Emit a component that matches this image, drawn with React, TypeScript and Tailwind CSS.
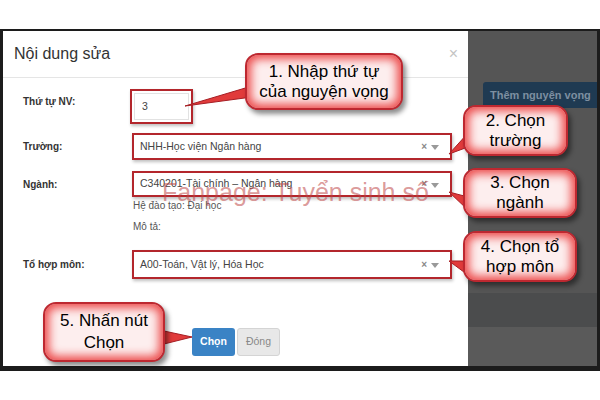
const font = "font-['Liberation_Sans',Arial,sans-serif]";

function Callout({ className, lines }: { className: string; lines: string[] }) {
  return (
    <div
      className={`absolute flex flex-col items-center justify-center rounded-[13px] border-2 border-[#bd2830] bg-[#fdeeee] text-center text-[17px] leading-[20px] text-black shadow-[inset_0_0_10px_4px_#ec4b4b,3px_4px_5px_rgba(0,0,0,0.45)] ${className}`}
    >
      {lines.map((l) => (
        <span key={l}>{l}</span>
      ))}
    </div>
  );
}

function Select({ value }: { value: string }) {
  return (
    <div className="flex h-full w-[320px] items-center justify-between border-2 border-[#b3262c] bg-white pl-[6px] pr-[11px] shadow-[1px_2px_3px_rgba(0,0,0,0.25)]">
      <span className="text-[10.5px] text-[#444]">{value}</span>
      <span className="flex items-center gap-[4px]">
        <span className="text-[10px] font-bold leading-none text-[#888]">×</span>
        <span className="mt-[2px] h-0 w-0 border-x-[4px] border-t-[5px] border-x-transparent border-t-[#999]" />
      </span>
    </div>
  );
}

function Row({
  label,
  children,
  className,
  labelClass = "",
}: {
  label: string;
  children: React.ReactNode;
  className: string;
  labelClass?: string;
}) {
  return (
    <div className={`flex ${className}`}>
      <div className={`w-[127px] shrink-0 pl-[20px] text-[10px] font-bold text-[#333] ${labelClass}`}>{label}</div>
      {children}
    </div>
  );
}

export default function App() {
  return (
    <div className={`relative h-[400px] w-[600px] overflow-hidden bg-white ${font}`}>
      <div className="h-[29px]" />
      {/* screenshot frame */}
      <div className="flex h-[342px] border-x-[3px] border-t-2 border-b-[5px] border-[#1c1c1c]">
        {/* modal */}
        <div className="relative flex w-[465px] flex-col bg-white">
          <div className="flex h-[47px] items-center justify-between border-b border-[#e5e5e5] pl-[11px] pr-[10px]">
            <span className="text-[16px] text-[#333]">Nội dung sửa</span>
            <span className="text-[16px] leading-none text-[#c4c4c4]">×</span>
          </div>

          <Row label="Thứ tự NV:" className="mt-[11px] h-[35px]" labelClass="pt-[5px]">
            <div className="w-[63px] border-2 border-[#b3262c] p-[2px] shadow-[1px_2px_3px_rgba(0,0,0,0.25)]">
              <div className="flex h-full items-center border border-[#e2e2e2] pl-[7px] text-[10.5px] text-[#444]">3</div>
            </div>
          </Row>

          <Row label="Trường:" className="mt-[9px] h-[27px] items-center">
            <div className="ml-[2px] h-full">
              <Select value="NHH-Học viện Ngân hàng" />
            </div>
          </Row>

          <Row label="Ngành:" className="mt-[11px] h-[26px] items-center">
            <div className="ml-[2px] h-full">
              <Select value="C340201-Tài chính – Ngân hàng" />
            </div>
          </Row>

          <div className="ml-[130px] mt-[2px] text-[10px] leading-[14px] text-[#555]">Hệ đào tạo: Đại học</div>
          <div className="ml-[130px] mt-[7px] text-[10px] leading-[14px] text-[#555]">Mô tả:</div>

          <Row label="Tổ hợp môn:" className="mt-[16px] h-[29px] items-center">
            <div className="ml-[2px] h-full">
              <Select value="A00-Toán, Vật lý, Hóa Học" />
            </div>
          </Row>

          <div className="ml-[189px] mt-[49px] flex gap-[2px]">
            <button className="h-[28px] w-[43px] rounded-[3px] bg-[#3a83c5] text-[10.5px] font-bold text-white">Chọn</button>
            <button className="h-[28px] w-[43px] rounded-[3px] border border-[#d4d4d4] bg-[#e8e8e8] text-[10.5px] text-[#888]">Đóng</button>
          </div>
        </div>

        {/* dimmed page behind */}
        <div className="flex flex-1 flex-col overflow-hidden">
          <div className="h-[262px] bg-[#555555] pl-[15px] pt-[51px]">
            <div className="flex h-[26px] w-[130px] items-center rounded-l-[3px] bg-[#1f3a52] pl-[7px] text-[11px] font-bold text-[#7d8fa1]">
              Thêm nguyện vọng
            </div>
          </div>
          <div className="h-[34px] bg-[#4b4c4d]" />
          <div className="flex-1 bg-[#5a5a5a]" />
        </div>
      </div>

      {/* watermark */}
      <div className="pointer-events-none absolute left-[162px] top-[180px] text-[25px] leading-[25px] text-[rgba(190,70,70,0.55)]">
        Fanpage: Tuyển sinh số
      </div>

      {/* callout pointers */}
      <svg className="pointer-events-none absolute left-0 top-0" width="600" height="400">
        <g fill="#e13b3b" stroke="#a61e24" strokeWidth="1">
          <polygon points="252,86 252,97 185,106" />
          <polygon points="468,133 468,147 449,154" />
          <polygon points="468,197 468,210 449,192" />
          <polygon points="468,261 468,275 449,261" />
          <polygon points="164,331 164,344 192,337" />
        </g>
      </svg>

      <Callout className="left-[245px] top-[53px] h-[57px] w-[158px]" lines={["1. Nhập thứ tự", "của nguyện vọng"]} />
      <Callout className="left-[463px] top-[105px] h-[51px] w-[105px]" lines={["2. Chọn", "trường"]} />
      <Callout className="left-[463px] top-[168px] h-[50px] w-[114px]" lines={["3. Chọn", "ngành"]} />
      <Callout className="left-[463px] top-[231px] h-[51px] w-[114px]" lines={["4. Chọn tổ", "hợp môn"]} />
      <Callout className="left-[43px] top-[302px] h-[60px] w-[122px] leading-[22px]" lines={["5. Nhấn nút", "Chọn"]} />
    </div>
  );
}
